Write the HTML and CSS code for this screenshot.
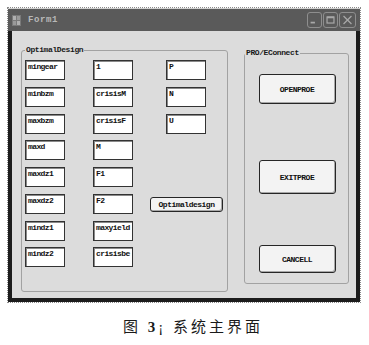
FILE: index.html
```html
<!DOCTYPE html>
<html>
<head>
<meta charset="utf-8">
<link rel="stylesheet" href="styles.css">
</head>
<body>
<div class="page">
  <div class="frame">
    <div class="window">
      <div class="titlebar">
        <svg class="appicon" width="9" height="11" viewBox="0 0 9 11">
          <rect x="0" y="0" width="9" height="11" fill="#7a7a7a"/>
          <rect x="1" y="1" width="3" height="4" fill="#b0b0b0"/>
          <rect x="5" y="1" width="3" height="4" fill="#9a9a9a"/>
          <rect x="1" y="6" width="3" height="4" fill="#9a9a9a"/>
          <rect x="5" y="6" width="3" height="4" fill="#b0b0b0"/>
        </svg>
        <span class="title">Form1</span>
        <div class="tbtns">
          <div class="tbtn"><svg width="15" height="16" viewBox="0 0 15 16"><rect x="3" y="10" width="5" height="2" fill="#a8a8a8"/></svg></div>
          <div class="tbtn"><svg width="15" height="16" viewBox="0 0 15 16"><rect x="3.5" y="4.5" width="8" height="7" fill="none" stroke="#a8a8a8" stroke-width="1.4"/><rect x="3.5" y="4" width="8" height="2" fill="#a8a8a8"/></svg></div>
          <div class="tbtn wide"><svg width="17" height="16" viewBox="0 0 17 16"><path d="M4 3.5 L13 12.5 M13 3.5 L4 12.5" stroke="#a8a8a8" stroke-width="1.4"/></svg></div>
        </div>
      </div>
      <div class="client">
        <fieldset class="group g1">
          <legend>OptimalDesign</legend>
          <div class="grid">
            <div class="tb">mingear</div><div class="tb">1</div><div class="tb c3">P</div>
            <div class="tb">minbzm</div><div class="tb">crisisM</div><div class="tb c3">N</div>
            <div class="tb">maxbzm</div><div class="tb">crisisF</div><div class="tb c3">U</div>
            <div class="tb">maxd</div><div class="tb">M</div><div></div>
            <div class="tb">maxdz1</div><div class="tb">F1</div><div></div>
            <div class="tb">maxdz2</div><div class="tb">F2</div><div class="cell"><button class="btn small">Optimaldesign</button></div>
            <div class="tb">mindz1</div><div class="tb">maxyield</div><div></div>
            <div class="tb">mindz2</div><div class="tb">crisisbe</div><div></div>
          </div>
        </fieldset>
        <fieldset class="group g2">
          <legend>PRO/EConnect</legend>
          <button class="btn big b1">OPENPROE</button>
          <button class="btn big b2">EXITPROE</button>
          <button class="btn big b3">CANCELL</button>
        </fieldset>
      </div>
    </div>
  </div>
  <p class="caption">图 <b>3</b>¡ 系统主界面</p>
</div>
</body>
</html>
```
FILE: styles.css
```css
html, body {
  margin: 0;
  padding: 0;
  background: #ffffff;
}
.page {
  padding: 7px 0 0 7px;
}
.frame {
  width: 354px;
  height: 296px;
  box-sizing: border-box;
  border: 1px dotted #8a8a8a;
}
.window {
  height: 100%;
  display: flex;
  flex-direction: column;
}
.titlebar {
  border-top: 1px solid #cfcfcf;
  background: #5a5a5a;
  display: flex;
  align-items: center;
  padding-left: 4px;
  padding-right: 4px;
  box-sizing: border-box;
  height: 23px;
}
.appicon {
  display: block;
  margin-top: 1px;
}
.title {
  margin-left: 7px;
  font-family: "Liberation Mono", monospace;
  font-weight: bold;
  font-size: 9px;
  letter-spacing: 0.6px;
  color: #b8b8b8;
}
.tbtns {
  margin-left: auto;
  display: flex;
  gap: 1px;
}
.tbtn {
  width: 15px;
  height: 16px;
  box-sizing: border-box;
  border: 1px solid #8e8e8e;
  border-radius: 3px;
  display: flex;
  align-items: center;
  justify-content: center;
  overflow: hidden;
}
.tbtn.wide {
  width: 17px;
}
.client {
  flex: 1;
  background: #dcdcdc;
  border-left: 4px solid #1c1c1c;
  border-right: 4px solid #1c1c1c;
  border-bottom: 4px solid #1c1c1c;
  display: flex;
  align-items: flex-start;
  padding-left: 9px;
}
.group {
  margin: 0;
  border: 1px solid #a2a2a2;
  border-radius: 3px;
  box-sizing: border-box;
  min-width: 0;
}
.group legend {
  font-family: "Liberation Mono", monospace;
  font-weight: bold;
  font-size: 8px;
  line-height: 10px;
  letter-spacing: -0.4px;
  color: #1a1a1a;
  padding: 0 1px;
}
.g1 {
  margin-top: 14px;
  width: 207px;
  height: 247px;
  padding: 5px 0 0 3px;
}
.g2 {
  margin-top: 17px;
  margin-left: 16px;
  width: 105px;
  height: 236px;
  padding: 16px 0 0 0;
  display: flex;
  flex-direction: column;
  align-items: center;
}
.grid {
  display: grid;
  grid-template-columns: 68px 57px 73px;
  grid-auto-rows: 20px;
  row-gap: 6.75px;
}
.tb {
  width: 40px;
  height: 20px;
  box-sizing: border-box;
  background: #ffffff;
  border: 1px solid #333333;
  box-shadow: inset 1px 1px 0 #8a8a8a;
  font-family: "Liberation Mono", monospace;
  font-weight: bold;
  font-size: 8px;
  line-height: 10px;
  letter-spacing: -0.6px;
  color: #111111;
  padding: 1px 0 0 2px;
  overflow: hidden;
  white-space: nowrap;
}
.tb.c3 {
  margin-left: 16px;
}
.cell {
  display: flex;
  align-items: center;
}
.btn {
  box-sizing: border-box;
  background: #f3f3f3;
  border: 1px solid #262626;
  border-radius: 3px;
  box-shadow: inset -1px -1px 0 #a8a8a8;
  font-family: "Liberation Mono", monospace;
  font-weight: bold;
  font-size: 8px;
  letter-spacing: -0.5px;
  color: #111111;
  padding: 0;
  margin: 0;
}
.btn.small {
  width: 73px;
  height: 15px;
  margin-top: 1px;
}
.btn.big {
  width: 77px;
  margin-left: 1px;
}
.b1 {
  height: 30px;
}
.b2 {
  height: 34px;
  margin-top: 56px;
}
.b3 {
  height: 28px;
  margin-top: 51px;
}
.caption {
  margin: 15px 0 0 116px;
  font-family: "Liberation Serif", "Noto Sans CJK SC", serif;
  font-size: 15px;
  line-height: 18px;
  letter-spacing: 3px;
  color: #1a1a1a;
}
```
